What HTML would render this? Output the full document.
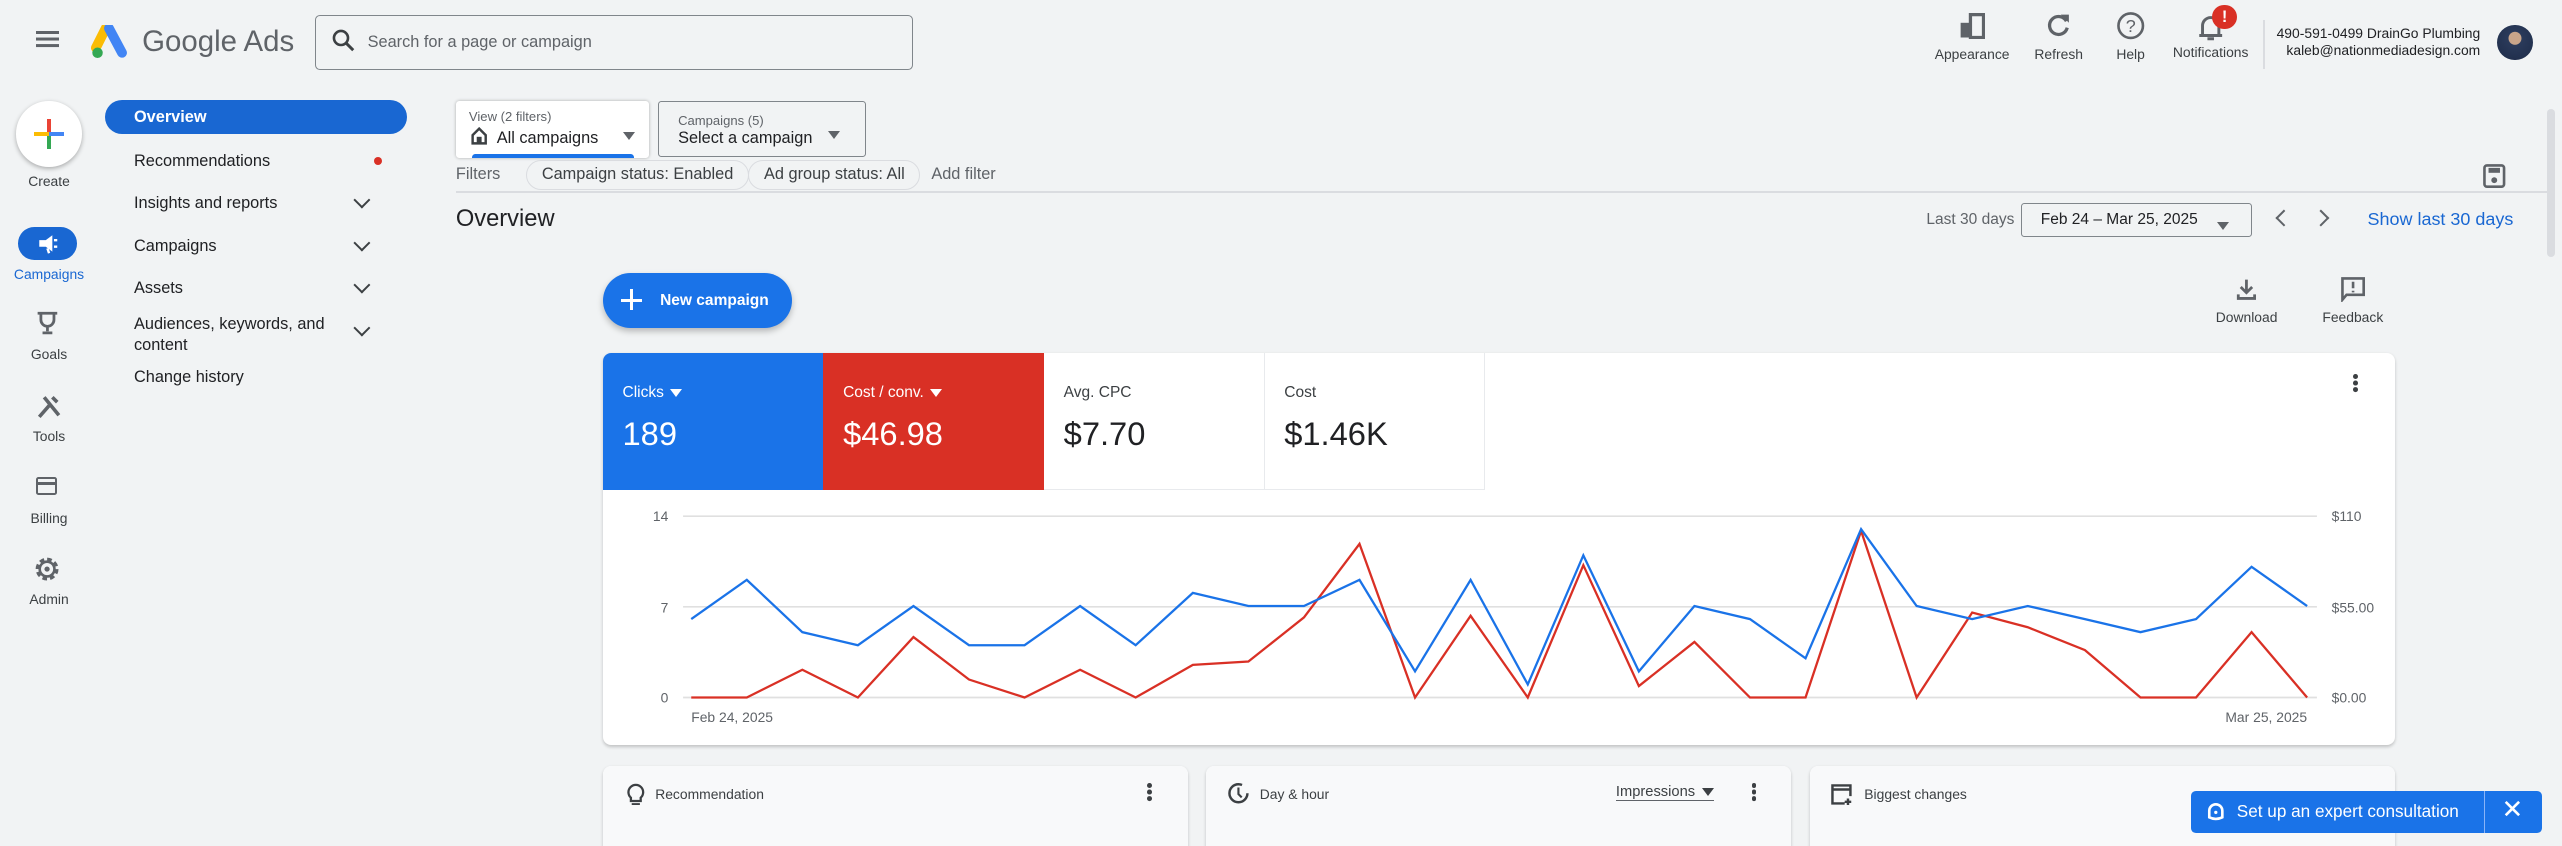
<!DOCTYPE html>
<html><head><meta charset="utf-8"><style>
html,body{margin:0;padding:0;background:#f1f3f4;overflow:hidden}
#w{zoom:1.6339;width:1568px;height:518px;position:relative;font-family:"Liberation Sans",sans-serif;color:#202124;background:#f1f3f4;overflow:hidden}
.a{position:absolute}
.nav{font-size:10px;color:#202124}
.chev{position:absolute;left:218px;width:6px;height:6px;border-right:1.5px solid #3c4043;border-bottom:1.5px solid #3c4043;transform:rotate(45deg)}
.tb{font-size:8.5px;color:#3c4043;text-align:center;width:60px}
.rail{font-size:8.5px;color:#3c4043;text-align:center;width:60px;left:0}
.chip{border:1px solid #dadce0;border-radius:10px;padding:2px 9px;font-size:10px;color:#3c4043;top:98px;height:13px;line-height:13px}
.tri{display:inline-block;width:0;height:0;border-left:4px solid transparent;border-right:4px solid transparent;border-top:5px solid currentColor;vertical-align:middle;margin-left:4px}
</style></head><body><div id="w">
<!-- header -->
<div class="a" style="left:22px;top:19px;width:14px;height:2px;background:#5f6368;box-shadow:0 4px 0 #5f6368,0 8px 0 #5f6368"></div>
<svg class="a" style="left:56px;top:15px" width="24" height="22" viewBox="0 0 24 22"><path d="M9 2 L3 14" stroke="#fbbc04" stroke-width="6" stroke-linecap="round"/><path d="M11 2 L19 17" stroke="#4285f4" stroke-width="6" stroke-linecap="round"/><circle cx="4" cy="17" r="3.2" fill="#34a853"/></svg>
<div class="a" style="left:87px;top:15px;font-size:18px;color:#5f6368">Google Ads</div>
<div class="a" style="left:193px;top:9px;width:366px;height:34px;border:1px solid #80868b;border-radius:3px;box-sizing:border-box"></div>
<svg class="a" style="left:203px;top:18px" width="14" height="14" viewBox="0 0 14 14"><circle cx="5.5" cy="5.5" r="4.3" stroke="#3c4043" stroke-width="1.6" fill="none"/><path d="M8.7 8.7 L13 13" stroke="#3c4043" stroke-width="1.8"/></svg>
<div class="a" style="left:225px;top:20px;font-size:10px;color:#5f6368">Search for a page or campaign</div>
<!-- top right icons -->
<svg class="a" style="left:1199px;top:8px" width="16" height="16"><rect x="1" y="6" width="6" height="9" fill="#5f6368"/><rect x="7" y="1" width="8" height="14" fill="none" stroke="#5f6368" stroke-width="2"/></svg>
<div class="a tb" style="left:1177px;top:28px">Appearance</div>
<svg class="a" style="left:1252px;top:8px" width="16" height="16"><path d="M12.5 5 A5.5 5.5 0 1 0 13 9" stroke="#5f6368" stroke-width="2" fill="none"/><path d="M9 1 L14 1 L14 6Z" fill="#5f6368"/></svg>
<div class="a tb" style="left:1230px;top:28px">Refresh</div>
<svg class="a" style="left:1295px;top:7px" width="18" height="18"><circle cx="9" cy="9" r="7.5" stroke="#5f6368" stroke-width="1.6" fill="none"/><text x="9" y="13" font-size="11" text-anchor="middle" fill="#5f6368" font-family="Liberation Sans">?</text></svg>
<div class="a tb" style="left:1274px;top:28px">Help</div>
<svg class="a" style="left:1344px;top:7px" width="18" height="20"><path d="M4 15 L4 9 A5 5 0 0 1 14 9 L14 15 Z M2 15 L16 15 M7 17 L11 17" stroke="#5f6368" stroke-width="1.8" fill="none"/></svg>
<div class="a" style="left:1354px;top:3px;width:15px;height:15px;border-radius:50%;background:#d93025;color:#fff;font-size:10px;font-weight:bold;text-align:center;line-height:15px">!</div>
<div class="a tb" style="left:1323px;top:27px">Notifications</div>
<div class="a" style="left:1386px;top:24px;width:1px;height:36px;background:#dadce0;top:24px;height:0"></div>
<div class="a" style="left:1385px;top:24px;width:1px;height:30px;background:#dadce0;top:12px"></div>
<div class="a" style="left:1392px;top:15px;font-size:8.5px;color:#202124;width:126px;text-align:right;line-height:11px">490-591-0499 DrainGo Plumbing<br>kaleb@nationmediadesign.com</div>
<div class="a" style="left:1528px;top:15px;width:22px;height:22px;border-radius:50%;background:radial-gradient(circle at 50% 38%,#c9a58a 0 22%,#2a3a5a 24%,#1d2b48)"></div>
<!-- scrollbar -->
<div class="a" style="left:1559px;top:67px;width:5px;height:90px;border-radius:3px;background:#dadce0"></div>
<!-- left rail -->
<div class="a" style="left:10px;top:62px;width:40px;height:40px;border-radius:50%;background:#fff;box-shadow:0 1px 3px rgba(0,0,0,.3)"></div>
<div class="a" style="left:29px;top:73px;width:2.5px;height:9px;background:#ea4335"></div>
<div class="a" style="left:29px;top:82px;width:2.5px;height:9px;background:#34a853"></div>
<div class="a" style="left:21px;top:81px;width:9px;height:2.5px;background:#fbbc04"></div>
<div class="a" style="left:30px;top:81px;width:9px;height:2.5px;background:#4285f4"></div>
<div class="a rail" style="top:106px">Create</div>
<div class="a" style="left:11px;top:139px;width:36px;height:20px;border-radius:10px;background:#1967d2"></div>
<svg class="a" style="left:22px;top:142px" width="14" height="14"><path d="M2 5 L6 5 L10 2 L10 12 L6 9 L2 9Z" fill="#fff"/><path d="M7 10 L8 13" stroke="#fff" stroke-width="1.5"/><path d="M11 5h2M11 9h2" stroke="#fff" stroke-width="1.5"/></svg>
<div class="a rail" style="top:163px;color:#1967d2">Campaigns</div>
<svg class="a" style="left:22px;top:190px" width="14" height="16"><path d="M3 2 H11 V6 A4 4 0 0 1 3 6Z M1 2 H3 M11 2 H13 M7 10 V13 M4 14 H10" stroke="#5f6368" stroke-width="1.7" fill="none"/></svg>
<div class="a rail" style="top:212px">Goals</div>
<svg class="a" style="left:22px;top:241px" width="16" height="16"><path d="M2 14 L9 6 M5 2 L14 13 M10 2 L13 5" stroke="#5f6368" stroke-width="2.2"/></svg>
<div class="a rail" style="top:262px">Tools</div>
<div class="a" style="left:22px;top:292px;width:13px;height:11px;border:1.6px solid #5f6368;border-radius:1.5px;box-sizing:border-box"></div>
<div class="a" style="left:22px;top:295px;width:13px;height:2px;background:#5f6368"></div>
<div class="a rail" style="top:312px">Billing</div>
<svg class="a" style="left:21px;top:340px" width="16" height="16"><circle cx="8" cy="8" r="5.5" stroke="#5f6368" stroke-width="3" stroke-dasharray="2.6 1.7" fill="none"/><circle cx="8" cy="8" r="4.5" stroke="#5f6368" stroke-width="1.6" fill="none"/><circle cx="8" cy="8" r="1.6" fill="#5f6368"/></svg>
<div class="a rail" style="top:362px">Admin</div>
<!-- nav -->
<div class="a" style="left:64px;top:61px;width:185px;height:21px;border-radius:11px;background:#1967d2"></div>
<div class="a nav" style="left:82px;top:66px;color:#fff;font-weight:bold">Overview</div>
<div class="a nav" style="left:82px;top:93px">Recommendations</div>
<div class="a" style="left:229px;top:96px;width:5px;height:5px;border-radius:50%;background:#d93025"></div>
<div class="a nav" style="left:82px;top:119px">Insights and reports</div><div class="chev" style="top:119px"></div>
<div class="a nav" style="left:82px;top:145px">Campaigns</div><div class="chev" style="top:145px"></div>
<div class="a nav" style="left:82px;top:171px">Assets</div><div class="chev" style="top:171px"></div>
<div class="a nav" style="left:82px;top:192px;line-height:13px">Audiences, keywords, and<br>content</div><div class="chev" style="top:197px"></div>
<div class="a nav" style="left:82px;top:225px">Change history</div>
<!-- view selectors -->
<div class="a" style="left:279px;top:62px;width:118px;height:35px;background:#fff;border-radius:2px;box-shadow:0 0 2px rgba(0,0,0,.3)"></div>
<div class="a" style="left:287px;top:67px;font-size:8px;color:#5f6368">View (2 filters)</div>
<svg class="a" style="left:288px;top:78px" width="10" height="11"><path d="M1 5 L5 1 L9 5 V10 H1Z" stroke="#3c4043" stroke-width="1.5" fill="none"/><rect x="3.5" y="6" width="3" height="4" fill="#3c4043"/></svg>
<div class="a" style="left:304px;top:79px;font-size:10px">All campaigns</div>
<div class="a" style="left:381px;top:73px;color:#5f6368"><span class="tri" style="margin:0"></span></div>
<div class="a" style="left:289px;top:94px;width:99px;height:3px;background:#1a73e8;border-radius:2px 2px 0 0"></div>
<div class="a" style="left:403px;top:62px;width:127px;height:34px;border:1px solid #80868b;border-radius:2px;box-sizing:border-box"></div>
<div class="a" style="left:415px;top:69px;font-size:8px;color:#5f6368">Campaigns (5)</div>
<div class="a" style="left:415px;top:79px;font-size:10px">Select a campaign</div>
<div class="a" style="left:507px;top:72px;color:#5f6368"><span class="tri" style="margin:0"></span></div>
<div class="a" style="left:279px;top:101px;font-size:10px;color:#5f6368">Filters</div>
<div class="a chip" style="left:322px">Campaign status: Enabled</div>
<div class="a chip" style="left:458px">Ad group status: All</div>
<div class="a" style="left:570px;top:101px;font-size:10px;color:#5f6368">Add filter</div>
<svg class="a" style="left:1519px;top:100px" width="16" height="16"><rect x="1.5" y="1.5" width="12" height="13" rx="1.5" stroke="#5f6368" stroke-width="1.6" fill="none"/><rect x="4" y="3" width="7" height="3" fill="#5f6368"/><circle cx="7.5" cy="10.5" r="1.8" fill="#5f6368"/></svg>
<div class="a" style="left:279px;top:117px;width:1280px;height:1px;background:#dadce0"></div>
<div class="a" style="left:279px;top:126px;font-size:14.5px">Overview</div>
<div class="a" style="left:1179px;top:129px;font-size:9.5px;color:#5f6368">Last 30 days</div>
<div class="a" style="left:1237px;top:124px;width:141px;height:21px;border:1px solid #80868b;border-radius:2px;box-sizing:border-box"></div>
<div class="a" style="left:1249px;top:129px;font-size:9.5px">Feb 24 – Mar 25, 2025</div>
<div class="a" style="left:1357px;top:128px;color:#5f6368"><span class="tri" style="margin:0"></span></div>
<div class="a" style="left:1394px;top:130px;width:6px;height:6px;border-left:1.5px solid #5f6368;border-bottom:1.5px solid #5f6368;transform:rotate(45deg)"></div>
<div class="a" style="left:1417px;top:130px;width:6px;height:6px;border-right:1.5px solid #5f6368;border-top:1.5px solid #5f6368;transform:rotate(45deg)"></div>
<div class="a" style="left:1449px;top:128px;font-size:11px;color:#1967d2">Show last 30 days</div>
<!-- new campaign -->
<div class="a" style="left:369px;top:167px;width:116px;height:34px;border-radius:17px;background:#1a73e8;box-shadow:0 2px 4px rgba(0,0,0,.25)"></div>
<div class="a" style="left:380px;top:183px;width:13px;height:1.8px;background:#fff"></div>
<div class="a" style="left:385.6px;top:177px;width:1.8px;height:13px;background:#fff"></div>
<div class="a" style="left:404px;top:179px;font-size:9.5px;color:#fff;font-weight:bold">New campaign</div>
<svg class="a" style="left:1368px;top:170px" width="14" height="14"><path d="M7 1 V9 M3.5 5.5 L7 9 L10.5 5.5 M2 10 V12.5 H12 V10" stroke="#5f6368" stroke-width="1.7" fill="none"/></svg>
<div class="a" style="left:1345px;top:189px;font-size:8.5px;color:#3c4043;width:60px;text-align:center">Download</div>
<svg class="a" style="left:1432px;top:169px" width="16" height="16"><path d="M1.5 1.5 H14.5 V11.5 H4 L1.5 14.5Z" stroke="#5f6368" stroke-width="1.6" fill="none"/><path d="M8 3.5 V7.5 M8 9 V10" stroke="#5f6368" stroke-width="1.6"/></svg>
<div class="a" style="left:1410px;top:189px;font-size:8.5px;color:#3c4043;width:60px;text-align:center">Feedback</div>
<!-- chart card -->
<div class="a" style="left:369px;top:216px;width:1097px;height:240px;background:#fff;border-radius:5px;box-shadow:0 1px 2px rgba(0,0,0,.2);overflow:hidden">
 <div class="a" style="left:0;top:0;width:135px;height:84px;background:#1a73e8"></div>
 <div class="a" style="left:135px;top:0;width:135px;height:84px;background:#d93025"></div>
 <div class="a" style="left:270px;top:0;width:135px;height:84px;border-right:1px solid #e8eaed;border-bottom:1px solid #e8eaed;box-sizing:border-box"></div>
 <div class="a" style="left:405px;top:0;width:135px;height:84px;border-right:1px solid #e8eaed;border-bottom:1px solid #e8eaed;box-sizing:border-box"></div>
 <div class="a" style="left:12px;top:19px;font-size:9.5px;color:#fff">Clicks<span class="tri"></span></div>
 <div class="a" style="left:12px;top:38px;font-size:20px;color:#fff">189</div>
 <div class="a" style="left:147px;top:19px;font-size:9.5px;color:#fff">Cost / conv.<span class="tri"></span></div>
 <div class="a" style="left:147px;top:38px;font-size:20px;color:#fff">$46.98</div>
 <div class="a" style="left:282px;top:19px;font-size:9.5px;color:#3c4043">Avg. CPC</div>
 <div class="a" style="left:282px;top:38px;font-size:20px">$7.70</div>
 <div class="a" style="left:417px;top:19px;font-size:9.5px;color:#3c4043">Cost</div>
 <div class="a" style="left:417px;top:38px;font-size:20px">$1.46K</div>
 <div class="a" style="left:1071px;top:13px;width:3px;height:3px;border-radius:50%;background:#3c4043;box-shadow:0 4px 0 #3c4043,0 8px 0 #3c4043"></div>
</div>
<svg class="a" style="left:369px;top:300px" width="1097" height="150" viewBox="369 300 1097 150" font-family="Liberation Sans" font-size="8.5" fill="#5f6368">
 <path d="M418 316H1418M418 371.5H1418M418 427H1418" stroke="#e0e0e0" stroke-width="1"/>
 <text x="409" y="319" text-anchor="end">14</text><text x="409" y="375" text-anchor="end">7</text><text x="409" y="430" text-anchor="end">0</text>
 <text x="1427" y="319">$110</text><text x="1427" y="375">$55.00</text><text x="1427" y="430">$0.00</text>
 <text x="423" y="442">Feb 24, 2025</text><text x="1412" y="442" text-anchor="end">Mar 25, 2025</text>
 <polyline fill="none" stroke="#d93025" stroke-width="1.4" points="423,427 457,427 491,410 525,427 559,390 593,416 627,427 661,410 695,427 730,407 764,405 798,378 832,333 866,427 900,377 935,427 969,346 1003,420 1037,393 1071,427 1105,427 1139,325 1173,427 1207,375 1241,384 1276,398 1310,427 1344,427 1378,387 1412,427"/>
 <polyline fill="none" stroke="#1a73e8" stroke-width="1.4" points="423,379 457,355 491,387 525,395 559,371 593,395 627,395 661,371 695,395 730,363 764,371 798,371 832,355 866,411 900,355 935,419 969,340 1003,411 1037,371 1071,379 1105,403 1139,324 1173,371 1207,379 1241,371 1276,379 1310,387 1344,379 1378,347 1412,371"/>
</svg>
<!-- bottom cards -->
<div class="a" style="left:369px;top:469px;width:358px;height:60px;background:#fff;border-radius:5px;box-shadow:0 1px 2px rgba(0,0,0,.2);overflow:hidden"><div style="height:56px;background:#f8f9fa"></div></div>
<div class="a" style="left:738px;top:469px;width:358px;height:60px;background:#fff;border-radius:5px;box-shadow:0 1px 2px rgba(0,0,0,.2);overflow:hidden"><div style="height:56px;background:#f8f9fa"></div></div>
<div class="a" style="left:1108px;top:469px;width:358px;height:60px;background:#fff;border-radius:5px;box-shadow:0 1px 2px rgba(0,0,0,.2);overflow:hidden"><div style="height:56px;background:#f8f9fa"></div></div>
<svg class="a" style="left:383px;top:479px" width="12" height="14"><path d="M3 9 A4.5 4.5 0 1 1 9 9 V11 H3Z M3.5 13 H8.5" stroke="#3c4043" stroke-width="1.4" fill="none"/></svg>
<div class="a" style="left:401px;top:481px;font-size:8.5px;color:#3c4043">Recommendation</div>
<div class="a" style="left:702px;top:479px;width:3px;height:3px;border-radius:50%;background:#3c4043;box-shadow:0 4px 0 #3c4043,0 8px 0 #3c4043"></div>
<svg class="a" style="left:751px;top:478px" width="14" height="14"><circle cx="7" cy="7.5" r="5.5" stroke="#3c4043" stroke-width="1.5" fill="none" stroke-dasharray="28 7"/><path d="M7 4 V8 L9 10" stroke="#3c4043" stroke-width="1.3" fill="none"/></svg>
<div class="a" style="left:771px;top:481px;font-size:8.5px;color:#3c4043">Day &amp; hour</div>
<div class="a" style="left:989px;top:480px;font-size:9px;color:#3c4043;border-bottom:1px solid #5f6368">Impressions<span class="tri"></span></div>
<div class="a" style="left:1072px;top:479px;width:3px;height:3px;border-radius:50%;background:#3c4043;box-shadow:0 4px 0 #3c4043,0 8px 0 #3c4043"></div>
<svg class="a" style="left:1120px;top:479px" width="14" height="14"><path d="M9 12.5 H1.5 V1.5 H12.5 V8 M1.5 4 H12.5 M11 9.5 V13.5 M9 11.5 H13" stroke="#3c4043" stroke-width="1.5" fill="none"/></svg>
<div class="a" style="left:1141px;top:481px;font-size:8.5px;color:#3c4043">Biggest changes</div>
<!-- consultation banner -->
<div class="a" style="left:1341px;top:484px;width:215px;height:26px;background:#1a73e8;border-radius:3px"></div>
<div class="a" style="left:1520px;top:484px;width:1px;height:26px;background:#8ab4f8"></div>
<svg class="a" style="left:1350px;top:490px" width="12" height="13"><path d="M2 10 V6 A4 4 0 0 1 10 6 V10 Q6 12 2 10Z" stroke="#fff" stroke-width="1.6" fill="none"/><circle cx="6" cy="7" r="1" fill="#fff"/></svg>
<div class="a" style="left:1369px;top:490px;font-size:10.5px;color:#fff">Set up an expert consultation</div>
<div class="a" style="left:1531px;top:486px;font-size:16px;color:#fff">✕</div>
</div></body></html>
